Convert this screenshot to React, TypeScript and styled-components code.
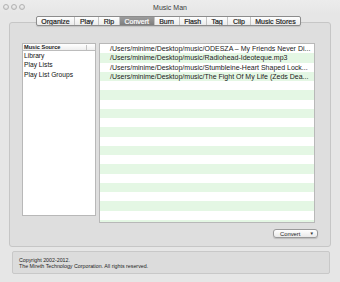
import React from 'react';
import styled, { createGlobalStyle } from 'styled-components';

const GlobalStyle = createGlobalStyle`
  html, body {
    margin: 0;
    padding: 0;
    background: #e6e6e6;
  }
  * {
    box-sizing: border-box;
  }
`;

const Window = styled.div`
  width: 340px;
  height: 282px;
  display: flex;
  flex-direction: column;
  background: #e6e6e6;
  font-family: "Liberation Sans", Arial, sans-serif;
  color: #222;
  overflow: hidden;
`;

const TitleBar = styled.div`
  height: 14px;
  display: grid;
  grid-template-columns: 1fr auto 1fr;
  align-items: center;
  padding: 0 3px;
  background: linear-gradient(#ececec, #e6e6e6);
`;

const Lights = styled.div`
  display: flex;
  gap: 2px;
`;

const Light = styled.span`
  width: 6px;
  height: 6px;
  border-radius: 50%;
  background: radial-gradient(circle at 50% 35%, #f2f2f2, #cfcfcf);
  border: 1px solid #b4b4b4;
`;

const Title = styled.div`
  font-size: 7px;
  color: #3a3a3a;
`;

const Body = styled.div`
  display: flex;
  flex-direction: column;
  padding: 1px 9px 0 9px;
`;

const TabStrip = styled.div`
  display: flex;
  justify-content: center;
  height: 10px;
  margin-bottom: -4px;
  margin-top: 1px;
  padding-right: 3px;
  position: relative;
  z-index: 1;
`;

const Tabs = styled.div`
  display: flex;
  border: 1px solid #8c8c8c;
  border-radius: 2px;
  background: linear-gradient(#fefefe, #ececec);
  box-shadow: 0 1px 1px rgba(0, 0, 0, 0.12);
  overflow: hidden;
`;

const Tab = styled.div<{ $active?: boolean; $first?: boolean }>`
  display: flex;
  align-items: center;
  padding: 0 4.6px;
  font-size: 7px;
  -webkit-text-stroke: 0.2px currentColor;
  color: ${p => (p.$active ? '#fff' : '#222')};
  background: ${p => (p.$active ? 'linear-gradient(#9c9c9c, #7e7e7e)' : 'transparent')};
  border-left: ${p => (p.$first ? 'none' : '1px solid #c4c4c4')};
  white-space: nowrap;
`;

const Panel = styled.div`
  height: 225px;
  border: 1px solid #c6c6c6;
  border-radius: 3px;
  background: #dedede;
  padding: 20px 15px 0 12px;
  display: flex;
  flex-direction: column;
`;

const Lists = styled.div`
  display: flex;
  gap: 3px;
  align-items: flex-start;
`;

const SourceList = styled.div`
  width: 74px;
  height: 173px;
  background: #fff;
  border: 1px solid #b8b8b8;
  display: flex;
  flex-direction: column;
`;

const SourceHeader = styled.div`
  height: 7px;
  display: flex;
  align-items: center;
  justify-content: space-between;
  padding: 0 0 0 1px;
  font-size: 5.6px;
  font-weight: 700;
  color: #222;
  background: linear-gradient(#ffffff, #eeeeee);
  border-bottom: 1px solid #bcbcbc;
`;

const HeaderDivider = styled.span`
  width: 1px;
  height: 5px;
  background: #c4c4c4;
  margin-right: 8px;
`;

const SourceItem = styled.div`
  height: 9.3px;
  display: flex;
  align-items: center;
  padding-left: 1px;
  font-size: 6.7px;
  color: #111;
  white-space: nowrap;
`;

const FileList = styled.div`
  flex: 1;
  height: 180px;
  background: #fff;
  border: 1px solid #b8b8b8;
  overflow: hidden;
`;

const FileRow = styled.div<{ $odd: boolean }>`
  height: 9.25px;
  display: flex;
  align-items: center;
  padding-left: 10px;
  font-size: 7px;
  color: #1a1a1a;
  white-space: nowrap;
  overflow: hidden;
  background: ${p => (p.$odd ? '#e4f7e4' : '#fff')};
`;

const Actions = styled.div`
  display: flex;
  justify-content: flex-end;
  margin-top: 6px;
  margin-right: -3px;
`;

const PopupButton = styled.div`
  width: 45px;
  height: 9px;
  display: flex;
  align-items: center;
  justify-content: space-between;
  padding: 0 3px 0 6px;
  font-size: 5.8px;
  color: #222;
  background: linear-gradient(#ffffff, #e9e9e9);
  border: 1px solid #9a9a9a;
  border-radius: 3px;
  box-shadow: 0 1px 1px rgba(0, 0, 0, 0.15);
`;

const Arrow = styled.span`
  font-size: 4.5px;
  color: #333;
`;

const CopyBox = styled.div`
  margin: 4px 1px 0 3px;
  height: 23px;
  border: 1px solid #c8c8c8;
  border-radius: 2px;
  background: #dcdcdc;
  display: flex;
  flex-direction: column;
  justify-content: center;
  padding-left: 6px;
  font-size: 5.3px;
  line-height: 6px;
  color: #1e1e1e;
`;

const tabs = ['Organize', 'Play', 'Rip', 'Convert', 'Burn', 'Flash', 'Tag', 'Clip', 'Music Stores'];

const files = [
  '/Users/minime/Desktop/music/ODESZA – My Friends Never Di...',
  '/Users/minime/Desktop/music/Radiohead-Ideoteque.mp3',
  '/Users/minime/Desktop/music/Stumbleine-Heart Shaped Lock...',
  '/Users/minime/Desktop/music/The Fight Of My Life (Zeds Dea...',
];

const ROWS = 20;

export default function App() {
  return (
    <Window>
      <GlobalStyle />
      <TitleBar>
        <Lights>
          <Light />
          <Light />
          <Light />
        </Lights>
        <Title>Music Man</Title>
        <div />
      </TitleBar>
      <Body>
        <TabStrip>
          <Tabs>
            {tabs.map((t, i) => (
              <Tab key={t} $first={i === 0} $active={t === 'Convert'}>
                {t}
              </Tab>
            ))}
          </Tabs>
        </TabStrip>
        <Panel>
          <Lists>
            <SourceList>
              <SourceHeader>
                Music Source
                <HeaderDivider />
              </SourceHeader>
              <SourceItem>Library</SourceItem>
              <SourceItem>Play Lists</SourceItem>
              <SourceItem>Play List Groups</SourceItem>
            </SourceList>
            <FileList>
              {Array.from({ length: ROWS }).map((_, i) => (
                <FileRow key={i} $odd={i % 2 === 1}>
                  {files[i] ?? ''}
                </FileRow>
              ))}
            </FileList>
          </Lists>
          <Actions>
            <PopupButton>
              Convert
              <Arrow>▼</Arrow>
            </PopupButton>
          </Actions>
        </Panel>
        <CopyBox>
          <div>Copyright 2002-2012.</div>
          <div>The Mireth Technology Corporation. All rights reserved.</div>
        </CopyBox>
      </Body>
    </Window>
  );
}
